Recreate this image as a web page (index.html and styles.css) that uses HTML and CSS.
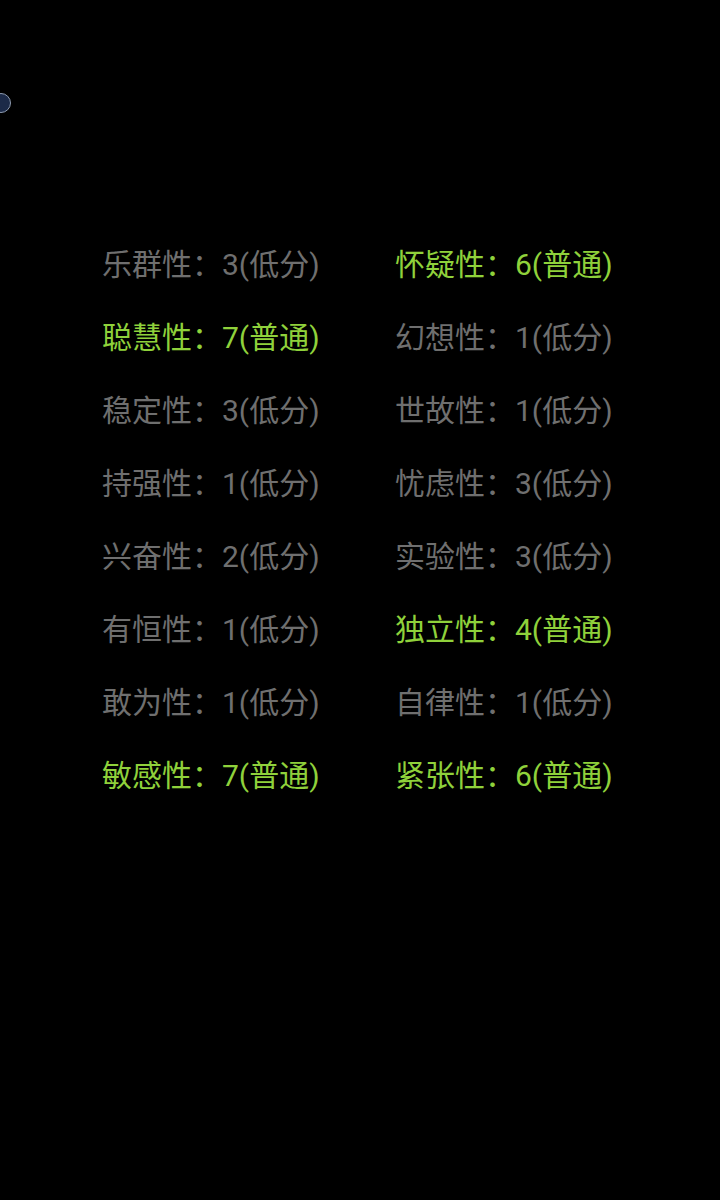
FILE: index.html
```html
<!DOCTYPE html>
<html>
<head>
<meta charset="utf-8">
<link rel="stylesheet" href="styles.css">
</head>
<body>
<div class="dot"></div>
<div class="grid">
  <div class="item low">乐群性：3(低分)</div>
  <div class="item mid">怀疑性：6(普通)</div>
  <div class="item mid">聪慧性：7(普通)</div>
  <div class="item low">幻想性：1(低分)</div>
  <div class="item low">稳定性：3(低分)</div>
  <div class="item low">世故性：1(低分)</div>
  <div class="item low">持强性：1(低分)</div>
  <div class="item low">忧虑性：3(低分)</div>
  <div class="item low">兴奋性：2(低分)</div>
  <div class="item low">实验性：3(低分)</div>
  <div class="item low">有恒性：1(低分)</div>
  <div class="item mid">独立性：4(普通)</div>
  <div class="item low">敢为性：1(低分)</div>
  <div class="item low">自律性：1(低分)</div>
  <div class="item mid">敏感性：7(普通)</div>
  <div class="item mid">紧张性：6(普通)</div>
</div>
</body>
</html>
```

FILE: styles.css
```css
html, body {
  margin: 0;
  padding: 0;
  background: #000;
  width: 720px;
  height: 1200px;
  overflow: hidden;
}
body {
  position: relative;
  font-family: Roboto, "Noto Sans CJK SC", sans-serif;
}
.dot {
  position: absolute;
  left: -9px;
  top: 93px;
  width: 18px;
  height: 18px;
  border-radius: 50%;
  background: #1c2a48;
  border: 1.5px solid #8e9bb0;
}
.grid {
  display: grid;
  grid-template-columns: 293px 293px;
  padding: 228px 0 0 102px;
}
.item {
  font-size: 30px;
  line-height: 73px;
  height: 73px;
  white-space: nowrap;
}
.low {
  color: #6f6f6f;
}
.mid {
  color: #8fd13b;
}
```
